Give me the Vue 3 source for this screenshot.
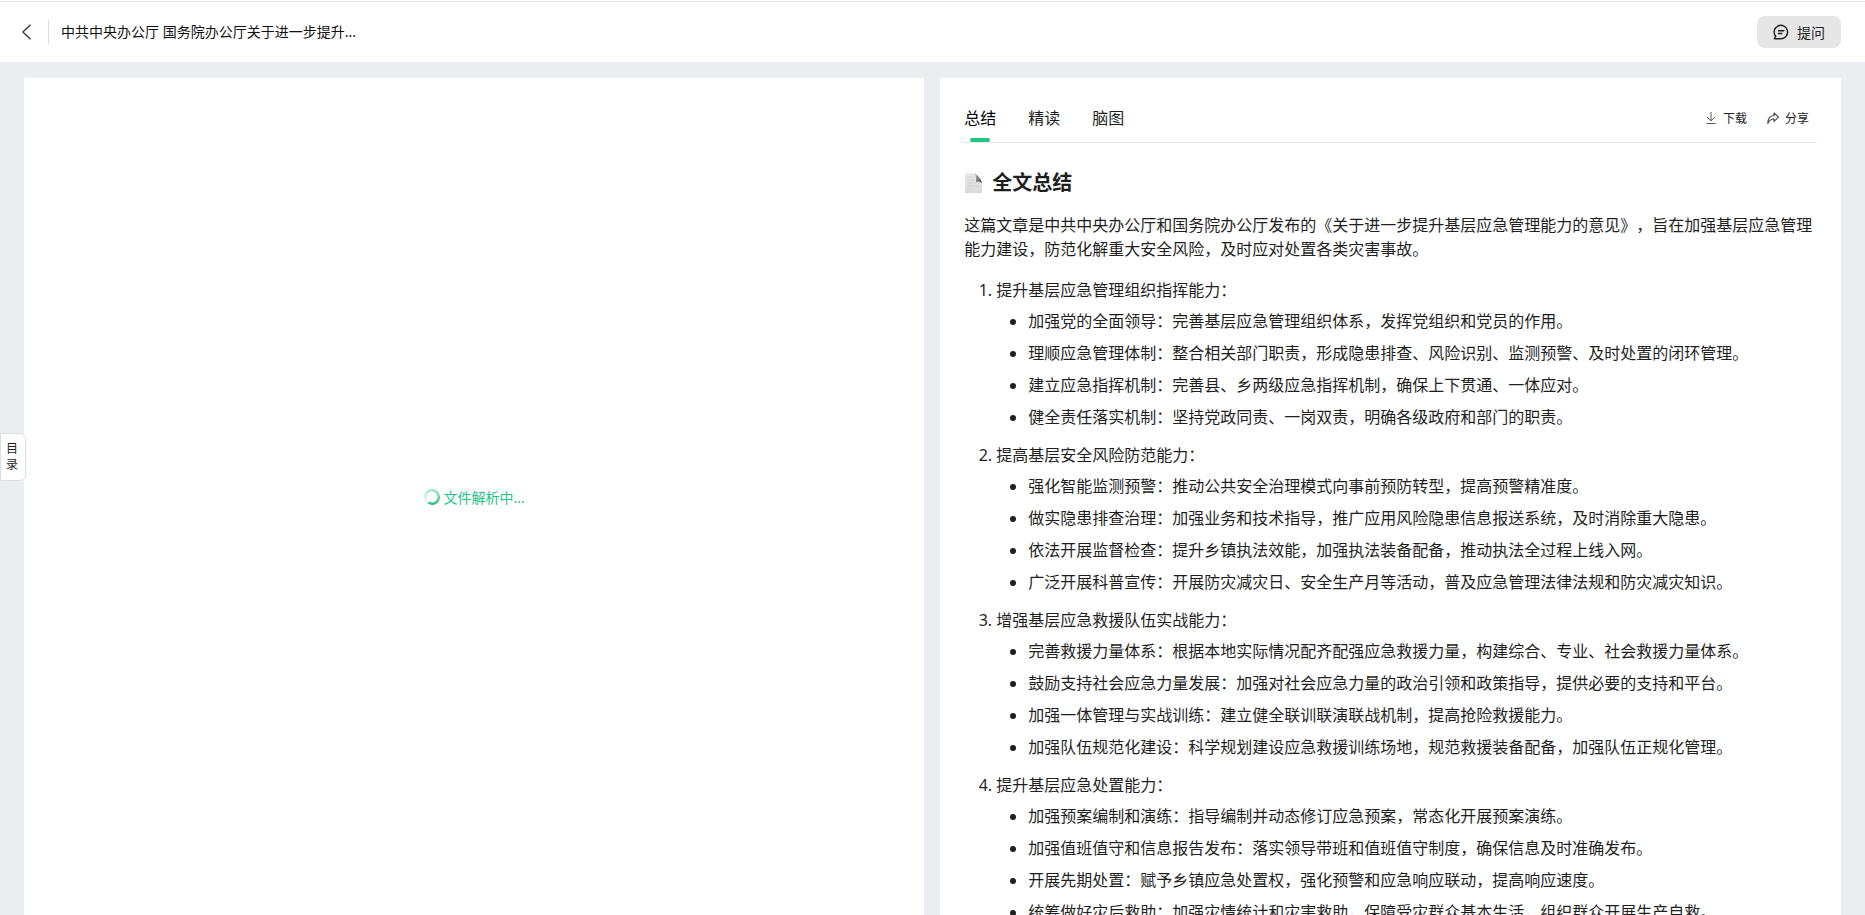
<script setup>
import { ref } from 'vue'

const tabs = ['总结', '精读', '脑图']
const active = ref('总结')

const sections = [
  {
    title: '提升基层应急管理组织指挥能力：',
    items: [
      '加强党的全面领导：完善基层应急管理组织体系，发挥党组织和党员的作用。',
      '理顺应急管理体制：整合相关部门职责，形成隐患排查、风险识别、监测预警、及时处置的闭环管理。',
      '建立应急指挥机制：完善县、乡两级应急指挥机制，确保上下贯通、一体应对。',
      '健全责任落实机制：坚持党政同责、一岗双责，明确各级政府和部门的职责。',
    ],
  },
  {
    title: '提高基层安全风险防范能力：',
    items: [
      '强化智能监测预警：推动公共安全治理模式向事前预防转型，提高预警精准度。',
      '做实隐患排查治理：加强业务和技术指导，推广应用风险隐患信息报送系统，及时消除重大隐患。',
      '依法开展监督检查：提升乡镇执法效能，加强执法装备配备，推动执法全过程上线入网。',
      '广泛开展科普宣传：开展防灾减灾日、安全生产月等活动，普及应急管理法律法规和防灾减灾知识。',
    ],
  },
  {
    title: '增强基层应急救援队伍实战能力：',
    items: [
      '完善救援力量体系：根据本地实际情况配齐配强应急救援力量，构建综合、专业、社会救援力量体系。',
      '鼓励支持社会应急力量发展：加强对社会应急力量的政治引领和政策指导，提供必要的支持和平台。',
      '加强一体管理与实战训练：建立健全联训联演联战机制，提高抢险救援能力。',
      '加强队伍规范化建设：科学规划建设应急救援训练场地，规范救援装备配备，加强队伍正规化管理。',
    ],
  },
  {
    title: '提升基层应急处置能力：',
    items: [
      '加强预案编制和演练：指导编制并动态修订应急预案，常态化开展预案演练。',
      '加强值班值守和信息报告发布：落实领导带班和值班值守制度，确保信息及时准确发布。',
      '开展先期处置：赋予乡镇应急处置权，强化预警和应急响应联动，提高响应速度。',
      '统筹做好灾后救助：加强灾情统计和灾害救助，保障受灾群众基本生活，组织群众开展生产自救。',
    ],
  },
]
</script>

<template>
  <div class="page">
    <header class="topbar">
      <button class="back" type="button" aria-label="返回">
        <svg width="12" height="16" viewBox="0 0 12 16" fill="none" stroke="#333" stroke-width="1.3">
          <path d="M9.500 .8 1.900 8l7.600 7.200" />
        </svg>
      </button>
      <span class="divider"></span>
      <span class="doc-title">中共中央办公厅 国务院办公厅关于进一步提升...</span>
      <button class="ask" type="button">
        <svg width="16" height="16" viewBox="0 0 16 16" fill="none" stroke="#1f1f1f" stroke-width="1.4" stroke-linecap="round" stroke-linejoin="round">
          <path d="M1.300 14.700 2.700 12.300A6.700 6.700 0 1 1 8 14.700z" />
          <path d="M5.400 6.700h5.400M5.400 9.500h3.400" />
        </svg>
        <span>提问</span>
      </button>
    </header>

    <main class="workspace">
      <section class="panel source">
        <svg width="16" height="16" viewBox="0 0 16 16" fill="none" stroke-width="2.400">
          <defs>
            <linearGradient id="ring" gradientUnits="userSpaceOnUse" x1="0" y1="1" x2="0" y2="15">
              <stop offset="0" stop-color="#22c47f" stop-opacity=".4" />
              <stop offset="1" stop-color="#22c47f" />
            </linearGradient>
            <linearGradient id="tail" gradientUnits="userSpaceOnUse" x1="0" y1="14" x2="0" y2="1">
              <stop offset="0" stop-color="#22c47f" stop-opacity=".08" />
              <stop offset="1" stop-color="#22c47f" stop-opacity=".4" />
            </linearGradient>
          </defs>
          <path d="M8 1.300a6.700 6.700 0 1 1-3.600 12.300" stroke="url(#ring)" />
          <path d="M4.400 13.600A6.700 6.700 0 0 1 8 1.300" stroke="url(#tail)" />
        </svg>
        <span>文件解析中...</span>
      </section>

      <section class="panel result">
        <div class="toolbar">
          <nav class="tabs">
            <button
              v-for="tab in tabs"
              :key="tab"
              type="button"
              class="tab"
              :class="{ active: tab === active }"
              @click="active = tab"
            >{{ tab }}</button>
          </nav>
          <div class="actions">
            <button class="action" type="button">
              <svg width="12" height="12" viewBox="0 0 12 12" fill="none" stroke="#555" stroke-width="1">
                <path d="M6 0v8.500M2 5l4 3.800L10 5M1.500 11.500h9" />
              </svg>
              <span>下载</span>
            </button>
            <button class="action" type="button">
              <svg width="12" height="12" viewBox="0 0 12 12" fill="none" stroke="#444" stroke-width="1.100" stroke-linejoin="round">
                <path d="M7 1l4.500 4.200L7 9.400V7C4 7 2.200 8.400 .8 11.400 .8 6.800 3 3.800 7 3.500z" />
              </svg>
              <span>分享</span>
            </button>
          </div>
        </div>

        <article class="content">
          <h2>
            <svg width="20" height="20" viewBox="0 0 20 20">
              <defs>
                <linearGradient id="sheet" x1="0" y1="0" x2="0" y2="1">
                  <stop offset="0" stop-color="#e9e9e9" />
                  <stop offset="1" stop-color="#dadada" />
                </linearGradient>
                <linearGradient id="fold" x1="0" y1="0" x2="1" y2="1">
                  <stop offset="0" stop-color="#c4c4c4" />
                  <stop offset="1" stop-color="#444" />
                </linearGradient>
              </defs>
              <path d="M1 0h10l7 9v11H1z" fill="url(#sheet)" />
              <path d="M3 4h6M3 7h7M3 10h9M3 13h12M3 17h4" stroke="#d0d0d0" stroke-width="1" />
              <path d="M10 0c2 2 2.500 5 2 9 3-.5 5 0 6 1.500C18 7 14 2 10 0z" fill="url(#fold)" />
            </svg>
            <span>全文总结</span>
          </h2>
          <p>这篇文章是中共中央办公厅和国务院办公厅发布的《关于进一步提升基层应急管理能力的意见》，旨在加强基层应急管理能力建设，防范化解重大安全风险，及时应对处置各类灾害事故。</p>
          <ol>
            <li v-for="section in sections" :key="section.title">
              {{ section.title }}
              <ul>
                <li v-for="item in section.items" :key="item">{{ item }}</li>
              </ul>
            </li>
          </ol>
        </article>
      </section>
    </main>

    <button class="catalog" type="button">目<br />录</button>
  </div>
</template>

<style>
body {
  margin: 0;
}
</style>

<style scoped>
.page {
  position: relative;
  display: flex;
  flex-direction: column;
  box-sizing: border-box;
  height: 100vh;
  padding-top: 1px;
  overflow: hidden;
  color: #1f1f1f;
  font-family: "Noto Sans", "Noto Sans CJK SC", sans-serif;
  font-size: 14px;
  text-spacing-trim: space-all;
}

button {
  margin: 0;
  padding: 0;
  border: 0;
  background: none;
  color: inherit;
  font: inherit;
  cursor: pointer;
}

svg {
  display: block;
  flex: none;
}

.topbar {
  display: flex;
  flex: none;
  align-items: center;
  height: 60px;
  padding: 0 24px 0 21px;
  border-top: 1px solid #e5e5e5;
}

.divider {
  width: 1px;
  height: 24px;
  margin: 0 12px 0 15px;
  background: #e0e0e0;
}

.doc-title {
  color: #111;
  line-height: 20px;
}

.ask {
  display: flex;
  align-items: center;
  gap: 8px;
  height: 32px;
  margin-left: auto;
  padding: 0 16px;
  border-radius: 8px;
  background: #e6e6e6;
}

.workspace {
  display: flex;
  flex: 1;
  gap: 16px;
  min-height: 0;
  padding: 16px 24px 0;
  background: #eaeef1;
}

.panel {
  box-sizing: border-box;
  width: 50%;
  min-width: 0;
  background: #fff;
}

.source {
  display: flex;
  align-items: center;
  justify-content: center;
  gap: 4px;
  color: #22c47f;
}

.result {
  padding: 16px 24px 0;
  overflow: hidden;
}

.toolbar {
  display: flex;
  align-items: center;
  justify-content: space-between;
  height: 48px;
  border-bottom: 1px solid #e5e5e5;
}

.tabs {
  display: flex;
  gap: 32px;
  height: 48px;
}

.tab {
  position: relative;
  padding-bottom: 2px;
  font-size: 16px;
}

.tab.active {
  color: #000;
}

.tab.active::after {
  content: "";
  position: absolute;
  bottom: 0;
  left: 6px;
  width: 20px;
  height: 4px;
  border-radius: 2px;
  background: #22c47f;
}

.actions {
  display: flex;
  gap: 20px;
  padding-right: 8px;
}

.action {
  display: flex;
  align-items: center;
  gap: 6px;
  font-size: 12px;
}

.content {
  font-size: 16px;
  line-height: 24px;
}

h2 {
  display: flex;
  align-items: center;
  gap: 8px;
  margin: 24px 0 14px;
  font-size: 20px;
  line-height: 32px;
}

p {
  margin: 0 0 17px;
}

ol,
ul {
  margin: 0;
  padding-left: 32px;
}

ol > li {
  margin-bottom: 14px;
}

ul {
  margin-top: 7px;
  list-style: disc;
}

ul > li {
  margin-bottom: 8px;
}

.catalog {
  position: absolute;
  top: 50%;
  left: 0;
  box-sizing: border-box;
  width: 26px;
  height: 48px;
  margin-top: -25px;
  padding-right: 2px;
  border: 1px solid #dcdfe2;
  border-radius: 0 6px 6px 0;
  background: #fff;
  font-size: 12px;
  line-height: 16px;
}
</style>
